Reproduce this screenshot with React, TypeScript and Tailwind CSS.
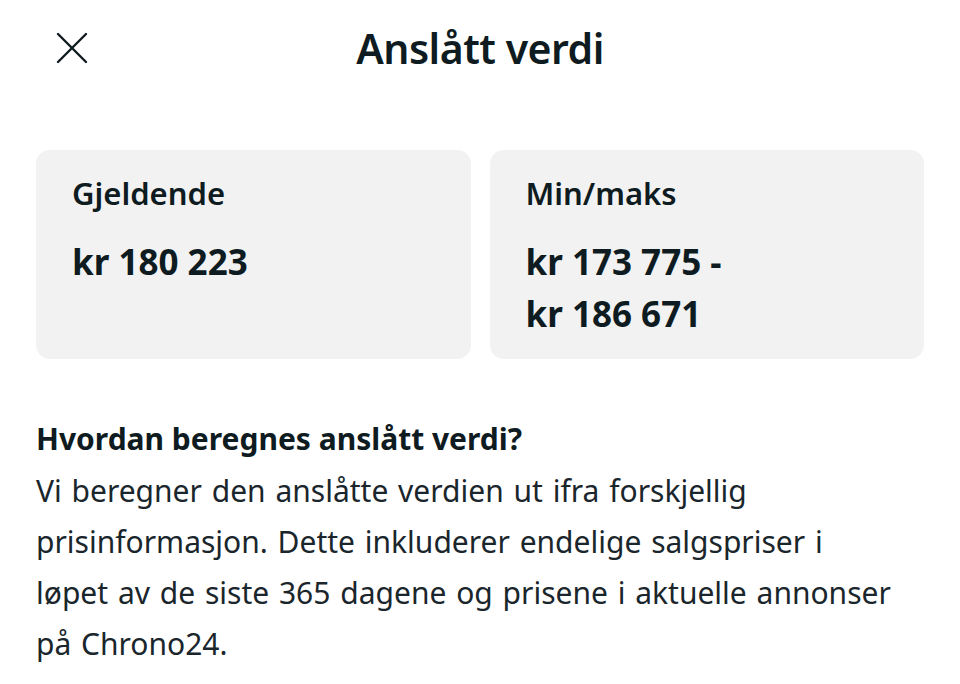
export default function App() {
    return (
        <div className="min-h-[684px] w-[960px] bg-white text-[#0e1b21]" style={{ fontFamily: '"Noto Sans", "Open Sans", sans-serif' }}>
            <header className="relative flex h-[96px] items-center justify-center">
                <button className="absolute left-[56px] top-[32px] h-[32px] w-[32px]" aria-label="Lukk">
                    <svg viewBox="0 0 32 32" className="h-[32px] w-[32px]" fill="none" stroke="#0e1b21" strokeWidth="2.4" strokeLinecap="round">
                        <path d="M2 2 L30 30 M30 2 L2 30" />
                    </svg>
                </button>
                <h1 className="text-[41px] font-semibold leading-none tracking-[-0.5px]">Anslått verdi</h1>
            </header>

            <div className="mt-[54px] grid grid-cols-2 gap-[19px] px-[36px]">
                <div className="h-[209px] rounded-[14px] bg-[#f2f2f2] px-[36px] pt-[23px]">
                    <p className="text-[31px] font-semibold leading-[40px]">Gjeldende</p>
                    <p className="mt-[23px] text-[35px] font-bold leading-[52px]">kr 180 223</p>
                </div>
                <div className="h-[209px] rounded-[14px] bg-[#f2f2f2] px-[36px] pt-[23px]">
                    <p className="text-[31px] font-semibold leading-[40px]">Min/maks</p>
                    <p className="mt-[23px] text-[35px] font-bold leading-[52px]">
                        kr 173 775 -<br />kr 186 671
                    </p>
                </div>
            </div>

            <section className="mt-[60px] px-[36px]">
                <h2 className="text-[30px] font-bold leading-[40px]">Hvordan beregnes anslått verdi?</h2>
                <p className="mt-[6px] text-[30px] leading-[51px] text-[#1a262c] [word-spacing:2px]">
                    Vi beregner den anslåtte verdien ut ifra forskjellig
                    <br />
                    prisinformasjon. Dette inkluderer endelige salgspriser i
                    <br />
                    løpet av de siste 365 dagene og prisene i aktuelle annonser
                    <br />
                    på Chrono24.
                </p>
            </section>
        </div>
    );
}
